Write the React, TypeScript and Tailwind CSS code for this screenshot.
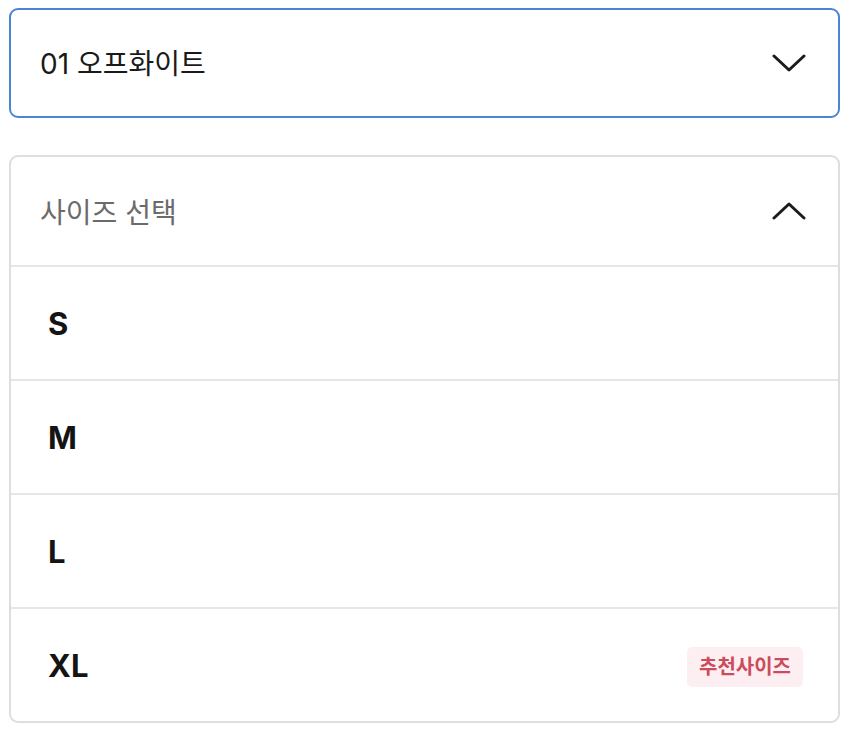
const sizes = ["S", "M", "L", "XL"];
const recommended = "XL";

function Chevron({ up = false }: { up?: boolean }) {
  return (
    <svg width="34" height="18" viewBox="0 0 34 18" fill="none" className="shrink-0">
      <polyline
        points={up ? "2,16 17,2 32,16" : "2,2 17,16 32,2"}
        stroke="#1c1c1c"
        strokeWidth="3"
        strokeLinecap="round"
        strokeLinejoin="round"
      />
    </svg>
  );
}

export default function App() {
  return (
    <div className="w-[850px] h-[734px] bg-white pl-[9px] pt-[8px] font-['Inter','Noto_Sans_CJK_KR',sans-serif]">
      <div className="w-[831px] flex flex-col gap-[37px]">
        {/* color picker */}
        <button className="h-[110px] flex items-center justify-between border-2 border-[#4a84d6] rounded-[9px] pl-[29px] pr-[32px] text-left">
          <span className="text-[28px] text-[#1a1a1a] pt-[2px]">01 오프화이트</span>
          <Chevron />
        </button>

        {/* size list */}
        <div className="border-2 border-[#dedede] rounded-[9px] flex flex-col overflow-hidden">
          <div className="h-[108px] flex items-center justify-between pl-[29px] pr-[32px]">
            <span className="text-[28px] text-[#6b6b6b] pt-[3px]">사이즈 선택</span>
            <Chevron up />
          </div>
          {sizes.map((s) => (
            <div
              key={s}
              className="h-[114px] border-t-2 border-[#e6e6e6] flex items-center justify-between pl-[37px] pr-[35px]"
            >
              <span className="text-[31px] font-bold text-[#141414] pt-[3px]">{s}</span>
              {s === recommended && (
                <span className="h-[40px] px-[12px] mt-[3px] flex items-center rounded-[5px] bg-[#fdeff1] text-[20px] font-semibold text-[#cc4b5c]">
                  추천사이즈
                </span>
              )}
            </div>
          ))}
        </div>
      </div>
    </div>
  );
}
